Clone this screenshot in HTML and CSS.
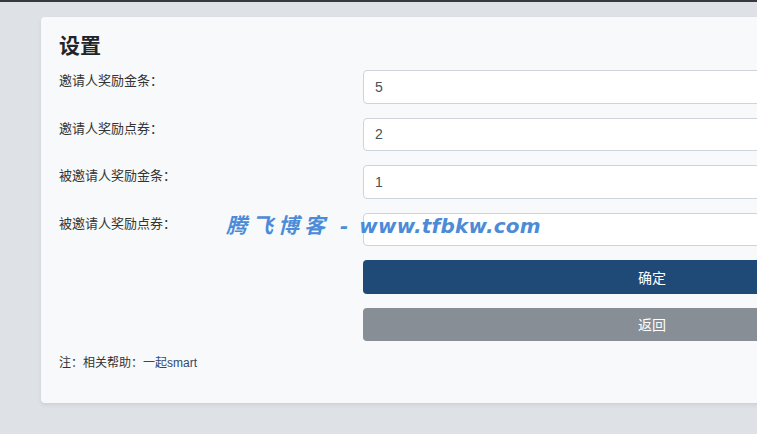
FILE: index.html
```html
<!DOCTYPE html>
<html lang="zh-CN">
<head>
<meta charset="utf-8">
<title>设置</title>
<link rel="stylesheet" href="styles.css">
</head>
<body>
<div class="page">
  <div class="card">
    <h1 class="title">设置</h1>
    <form class="form">
      <label class="label">邀请人奖励金条：</label>
      <input class="input" type="text" value="5">
      <label class="label">邀请人奖励点券：</label>
      <input class="input" type="text" value="2">
      <label class="label">被邀请人奖励金条：</label>
      <input class="input" type="text" value="1">
      <label class="label">被邀请人奖励点券：</label>
      <input class="input" type="text" value="">
      <span class="label"></span>
      <button class="btn btn-primary" type="button">确定</button>
      <span class="label"></span>
      <button class="btn btn-secondary" type="button">返回</button>
    </form>
    <p class="note">注：相关帮助：<a class="link" href="#">一起smart</a></p>
  </div>
  <div class="watermark"><span class="wm-cn">腾飞博客</span><span class="wm-dash">-</span><span class="wm-url">www.tfbkw.com</span></div>
</div>
</body>
</html>
```

FILE: styles.css
```css
html, body {
  margin: 0;
  padding: 0;
}
body {
  background: #dee2e6;
  border-top: 2px solid #343a40;
  overflow: hidden;
  height: 432px;
  font-family: "Liberation Sans", "Noto Sans CJK SC", sans-serif;
  color: #212529;
}
.page {
  position: relative;
  padding: 15px 0 0 41px;
}
.card {
  width: 918px;
  box-sizing: border-box;
  background: #f8f9fa;
  border-radius: 4px;
  box-shadow: 0 2px 4px rgba(0, 0, 0, 0.08);
  padding: 17px 18px 31px 18px;
}
.title {
  margin: 0 0 12px 0;
  font-size: 21px;
  line-height: 24px;
  font-weight: 700;
  color: #212529;
}
.form {
  display: grid;
  grid-template-columns: 304px 1fr;
  row-gap: 14px;
  margin: 0;
}
.label {
  font-size: 13px;
  line-height: 19.5px;
  color: #333;
  padding-top: 1px;
}
.input {
  height: 33.5px;
  box-sizing: border-box;
  border: 1px solid #ced4da;
  border-radius: 4px;
  background: #fff;
  padding: 0 11px;
  font-family: "Liberation Sans", "Noto Sans CJK SC", sans-serif;
  font-size: 14px;
  color: #495057;
  width: 100%;
  margin: 0;
}
.btn {
  height: 33.5px;
  border: none;
  border-radius: 4px;
  color: #fff;
  font-family: "Liberation Sans", "Noto Sans CJK SC", sans-serif;
  font-size: 14px;
  width: 100%;
  margin: 0;
  padding: 0;
}
.btn-primary {
  background: #1f4a78;
}
.btn-secondary {
  background: #878e95;
}
.note {
  margin: 13px 0 0 0;
  font-size: 12px;
  line-height: 18px;
  color: #333;
}
.link {
  color: #2b4a70;
  text-decoration: none;
}
.watermark {
  position: absolute;
  left: 226px;
  top: 208px;
  display: flex;
  align-items: baseline;
  font-family: "DejaVu Sans", "Noto Sans CJK SC", sans-serif;
  font-weight: 700;
  font-style: italic;
  font-size: 20px;
  line-height: 32px;
  color: #4b8bd8;
  white-space: nowrap;
}
.wm-cn {
  letter-spacing: 5px;
  font-size: 21px;
}
.wm-dash {
  margin: 0 11px 0 10px;
}
.wm-url {
  letter-spacing: 0.2px;
}
```
